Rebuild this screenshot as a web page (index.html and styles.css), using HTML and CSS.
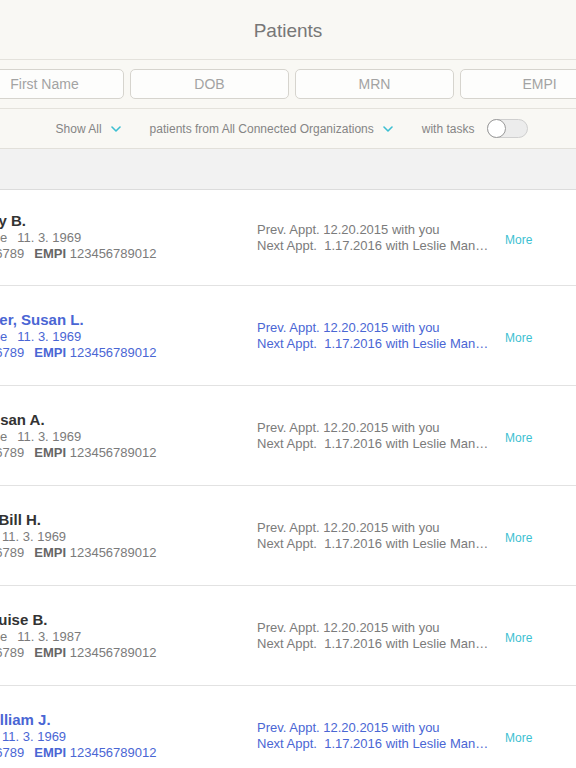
FILE: index.html
```html
<!DOCTYPE html>
<html lang="en">

<head>
  <meta charset="UTF-8">
  <meta name="viewport" content="width=device-width, initial-scale=1.0">
  <title>Patients</title>
  <link rel="stylesheet" href="styles.css">
</head>

<body>

  <header class="topbar">
    <h1 class="title">Patients</h1>
  </header>

  <!-- search fields (pane is scrolled, left part is off screen) -->
  <div class="search-row pane">
    <input class="search-field" placeholder="Last Name">
    <input class="search-field" placeholder="First Name">
    <input class="search-field" placeholder="DOB">
    <input class="search-field" placeholder="MRN">
    <input class="search-field" placeholder="EMPI">
  </div>

  <div class="filters">
    <span class="filter">Show All
      <svg class="chev" width="10" height="6" viewBox="0 0 10 6"><path d="M1 1l4 4 4-4" /></svg>
    </span>
    <span class="filter">patients from All Connected Organizations
      <svg class="chev" width="10" height="6" viewBox="0 0 10 6"><path d="M1 1l4 4 4-4" /></svg>
    </span>
    <span class="filter">with tasks
      <span class="toggle"><span class="knob"></span></span>
    </span>
  </div>

  <div class="band"></div>

  <ul class="patient-list pane">
    <li class="patient">
      <div class="info">
        <div class="name">Clark, Mary B.</div>
        <div class="sub"><span class="age">46 yo</span><span>Female</span><span class="gap">11. 3. 1969</span></div>
        <div class="sub"><b>MRN</b> 123456789<b class="gap">EMPI</b> 123456789012</div>
      </div>
      <div class="appt">
        <div>Prev. Appt. 12.20.2015 with you</div>
        <div>Next Appt.&nbsp; 1.17.2016 with Leslie Manning</div>
      </div>
      <a class="more">More</a>
    </li>
    <li class="patient linked">
      <div class="info">
        <div class="name">Goldmacher, Susan L.</div>
        <div class="sub"><span class="age">46 yo</span><span>Female</span><span class="gap">11. 3. 1969</span></div>
        <div class="sub"><b>MRN</b> 123456789<b class="gap">EMPI</b> 123456789012</div>
      </div>
      <div class="appt">
        <div>Prev. Appt. 12.20.2015 with you</div>
        <div>Next Appt.&nbsp; 1.17.2016 with Leslie Manning</div>
      </div>
      <a class="more">More</a>
    </li>
    <li class="patient">
      <div class="info">
        <div class="name">Brown, Susan A.</div>
        <div class="sub"><span class="age">46 yo</span><span>Female</span><span class="gap">11. 3. 1969</span></div>
        <div class="sub"><b>MRN</b> 123456789<b class="gap">EMPI</b> 123456789012</div>
      </div>
      <div class="appt">
        <div>Prev. Appt. 12.20.2015 with you</div>
        <div>Next Appt.&nbsp; 1.17.2016 with Leslie Manning</div>
      </div>
      <a class="more">More</a>
    </li>
    <li class="patient">
      <div class="info">
        <div class="name">Peterson, Bill H.</div>
        <div class="sub"><span class="age">46 yo</span><span>Male</span><span class="gap">11. 3. 1969</span></div>
        <div class="sub"><b>MRN</b> 123456789<b class="gap">EMPI</b> 123456789012</div>
      </div>
      <div class="appt">
        <div>Prev. Appt. 12.20.2015 with you</div>
        <div>Next Appt.&nbsp; 1.17.2016 with Leslie Manning</div>
      </div>
      <a class="more">More</a>
    </li>
    <li class="patient">
      <div class="info">
        <div class="name">Turner, Louise B.</div>
        <div class="sub"><span class="age">28 yo</span><span>Female</span><span class="gap">11. 3. 1987</span></div>
        <div class="sub"><b>MRN</b> 123456789<b class="gap">EMPI</b> 123456789012</div>
      </div>
      <div class="appt">
        <div>Prev. Appt. 12.20.2015 with you</div>
        <div>Next Appt.&nbsp; 1.17.2016 with Leslie Manning</div>
      </div>
      <a class="more">More</a>
    </li>
    <li class="patient linked">
      <div class="info">
        <div class="name">Wright, William J.</div>
        <div class="sub"><span class="age">46 yo</span><span>Male</span><span class="gap">11. 3. 1969</span></div>
        <div class="sub"><b>MRN</b> 123456789<b class="gap">EMPI</b> 123456789012</div>
      </div>
      <div class="appt">
        <div>Prev. Appt. 12.20.2015 with you</div>
        <div>Next Appt.&nbsp; 1.17.2016 with Leslie Manning</div>
      </div>
      <a class="more">More</a>
    </li>
  </ul>

</body>

</html>
```

FILE: styles.css
```css
body {
  margin: 0;
  padding: 0;
  font-family: "Liberation Sans", Arial, sans-serif;
  background-color: #fff;
  color: #7b7b7b;
  overflow: hidden;
}

/* the list pane is scrolled sideways */
.pane {
  margin-left: -200px;
}

/* Top bar */
.topbar {
  height: 59px;
  background-color: #f9f8f4;
  border-bottom: 1px solid #e4e2dc;
  display: flex;
  align-items: center;
  justify-content: center;
}

.title {
  margin: 0;
  font-size: 19px;
  font-weight: normal;
  color: #777;
  padding-top: 3px;
}

/* Search fields */
.search-row {
  height: 49px;
  box-sizing: border-box;
  padding-top: 9px;
  display: flex;
  gap: 6px;
  background-color: #f9f8f4;
  border-bottom: 1px solid #e4e2dc;
}

.search-field {
  flex: 0 0 159px;
  width: 159px;
  height: 30px;
  box-sizing: border-box;
  margin: 0;
  border: 1px solid #d6d4ce;
  border-radius: 5px;
  background-color: #fdfdfc;
  font-family: inherit;
  font-size: 14px;
  text-align: center;
  color: #555;
}

.search-field::placeholder {
  color: #a3a3a3;
}

/* Filters */
.filters {
  height: 40px;
  box-sizing: border-box;
  background-color: #f9f8f4;
  border-bottom: 1px solid #e2e0da;
  display: flex;
  align-items: center;
  justify-content: center;
  gap: 29px;
  padding-left: 8px;
  font-size: 12px;
  color: #858585;
}

.filter {
  display: flex;
  align-items: center;
}

.chev {
  margin-left: 9px;
  fill: none;
  stroke: #3dbfd2;
  stroke-width: 1.6;
  stroke-linecap: round;
  stroke-linejoin: round;
}

.toggle {
  display: inline-flex;
  margin-left: 13px;
  width: 41px;
  height: 19px;
  box-sizing: border-box;
  border: 1px solid #cfcfcf;
  border-radius: 10px;
  background-color: #ececec;
}

.knob {
  width: 19px;
  height: 19px;
  margin: -1px 0 0 -1px;
  box-sizing: border-box;
  border: 1px solid #9a9a9a;
  border-radius: 50%;
  background-color: #fff;
}

/* grey band above the list */
.band {
  height: 40px;
  background-color: #f2f2f2;
  border-bottom: 1px solid #dcdcdc;
}

/* Patient rows */
.patient-list {
  list-style: none;
  padding: 0;
  margin-top: 0;
  margin-bottom: 0;
}

.patient {
  height: 99px;
  display: flex;
  align-items: center;
  padding-left: 126px;
  border-bottom: 1px solid #e2e2e2;
}

.patient:first-child {
  height: 95px;
}

.info {
  width: 331px;
  flex-shrink: 0;
  white-space: nowrap;
  font-size: 13px;
}

.patient:first-child .info {
  padding-bottom: 2px;
}

.name {
  font-size: 15px;
  font-weight: bold;
  line-height: 18px;
  color: #333;
}

.sub {
  line-height: 16px;
}

.sub b {
  color: #666;
}

.age {
  margin-right: 6px;
}

.gap {
  margin-left: 10px;
}

.appt {
  width: 234px;
  flex-shrink: 0;
  font-size: 13px;
  line-height: 16px;
}

.appt div {
  white-space: nowrap;
  overflow: hidden;
  text-overflow: ellipsis;
}

.more {
  margin-left: 14px;
  padding-top: 5px;
  font-size: 12px;
  color: #3dbfd2;
  cursor: pointer;
}

/* rows from a linked record are shown in blue */
.linked .name,
.linked .sub,
.linked .sub b,
.linked .appt {
  color: #4a66d4;
}
```
